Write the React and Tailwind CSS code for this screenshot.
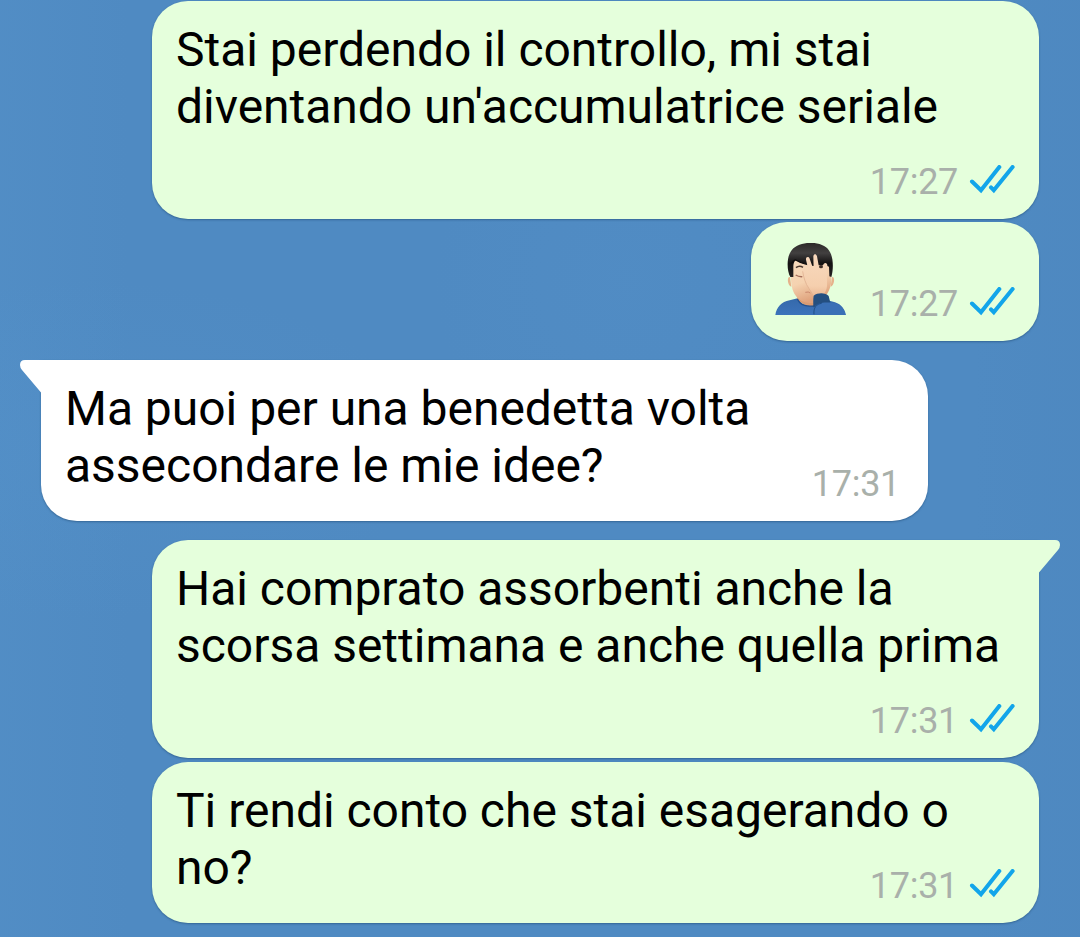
import React from 'react';
import clsx from 'clsx';

const messages = [
  {
    id: 1,
    lines: ['Stai perdendo il controllo, mi stai', "diventando un'accumulatrice seriale"],
    time: '17:27',
    outgoing: true,
    className: 'mt-px w-[887px] h-[218px]',
  },
  {
    id: 2,
    emoji: true,
    time: '17:27',
    outgoing: true,
    className: 'mt-[3px] w-[288px] h-[119px]',
  },
  {
    id: 3,
    lines: ['Ma puoi per una benedetta volta', 'assecondare le mie idee?'],
    time: '17:31',
    tail: true,
    inlineTime: true,
    className: 'mt-[19px] w-[887px] h-[161px]',
  },
  {
    id: 4,
    lines: ['Hai comprato assorbenti anche la', 'scorsa settimana e anche quella prima'],
    time: '17:31',
    outgoing: true,
    tail: true,
    className: 'mt-[19px] w-[887px] h-[218px]',
  },
  {
    id: 5,
    lines: ['Ti rendi conto che stai esagerando o', 'no?'],
    time: '17:31',
    outgoing: true,
    inlineTime: true,
    className: 'mt-1 w-[887px] h-[161px]',
  },
];

const ReadTicks = () => (
  <svg width="46" height="30" viewBox="0 0 46 30" fill="none" stroke="#12a5ea" strokeWidth="4" strokeLinecap="round">
    <path d="M3 16.500 12 25.300 30.300 2" />
    <path d="M22 22.400 24.800 25.300 43.600 2" />
  </svg>
);

const FacepalmEmoji = () => (
  <svg width="71" height="72" viewBox="30 24 213 216" aria-label="Facepalm">
    <defs>
      <linearGradient id="skin" x1="0" y1="0" x2="0.3" y2="1">
        <stop offset="0" stopColor="#f9dcc0" />
        <stop offset="0.6" stopColor="#f5d2b0" />
        <stop offset="1" stopColor="#dfa27c" />
      </linearGradient>
      <linearGradient id="hand" x1="0" y1="0" x2="0" y2="1">
        <stop offset="0" stopColor="#f8d9bd" />
        <stop offset="0.65" stopColor="#f5cfae" />
        <stop offset="1" stopColor="#e3a984" />
      </linearGradient>
      <linearGradient id="hair" x1="0" y1="0" x2="0" y2="1">
        <stop offset="0" stopColor="#2c2928" />
        <stop offset="0.3" stopColor="#424040" />
        <stop offset="0.6" stopColor="#141212" />
        <stop offset="1" stopColor="#252122" />
      </linearGradient>
      <linearGradient id="shirt" x1="0" y1="0" x2="0" y2="1">
        <stop offset="0" stopColor="#3468a9" />
        <stop offset="1" stopColor="#3c73bb" />
      </linearGradient>
    </defs>
    <path d="M31 240c4-24 18-39 43-44l24-6c12 20 30 27 52 21l4-24 56 15c20 7 29 20 33 38z" fill="url(#shirt)" />
    <path d="M97 176h60v34q-36 12-60-18z" fill="#d89b73" />
    <path d="M97 192c8 17 26 25 54 20" fill="none" stroke="#24508d" strokeWidth="4" />
    <path d="M75 126c-10-2-8 25 4 29M201 126c10-2 8 25-4 29" fill="#e6b28b" />
    <path d="M77 81c17-24 106-26 122 1v53c-1 39-28 69-63 69-33 0-57-25-58-69z" fill="url(#skin)" />
    <path d="M76 126c-11-19-11-58 1-76 20-35 102-37 119 3 10 20 9 54 3 73l-6-2-1-29c-9-4-22-4-33-4-29-1-51-4-67-16-5 5-7 12-7 21v30z" fill="url(#hair)" />
    <path d="M80 85q8-11 12-10 30 18 67 16" fill="none" stroke="#0f0d0e" strokeWidth="4" />
    <path d="M93 98q10-8 21-1" fill="none" stroke="#49372e" strokeWidth="5" />
    <path d="M92 120q9 6 20 5" fill="none" stroke="#a36c59" strokeWidth="4" />
    <path d="M148 201c-1-18-11-29-18-42-10-17-15-35-17-50-2-8 6-10 10-3l12 20-12-52c-1-8 7-11 11-3l12 34-1-41c1-8 9-8 11 0l8 43 12-20c5-7 12-2 11 6-3 27 0 44-1 60-1 19-16 26-16 51z" fill="url(#hand)" />
    <path d="M113 109c3 20 9 37 18 50 7 12 15 22 17 34" fill="none" stroke="#dba989" strokeWidth="2" />
    <ellipse cx="168" cy="95" rx="6" ry="5" fill="#3e2d27" />
    <path d="M121 172q10-3 15 2" fill="none" stroke="#c9876c" strokeWidth="3" />
    <path d="M145 217c0-14-1-24 1-35 13-10 36-9 45 1l6 24z" fill="#244f80" />
    <path d="M145 240c-2-16 2-28 16-34 13-5 42-5 57 2 15 8 21 19 23 32z" fill="#3a70b6" />
    <path d="M147 238c-2-20 7-31 23-33" fill="none" stroke="#1f4e87" strokeWidth="3" />
  </svg>
);

// little corner that sticks out of the first bubble in a group
const Tail = ({ outgoing }) => (
  <svg
    width="24"
    height="33"
    viewBox="0 0 24 33"
    className={clsx(
      'absolute top-0',
      outgoing ? '-right-[21px] text-[#e5ffdc]' : '-left-[21px] -scale-x-100 text-white'
    )}
  >
    <path d="M0 0H19Q24 0 24 5Q24 7.500 22 10L3 32.500V33H0Z" fill="currentColor" />
  </svg>
);

const MessageBubble = ({ message }) => {
  const { lines, emoji, time, outgoing, tail, inlineTime, className } = message;

  return (
    <div
      className={clsx(
        'relative flex shrink-0 flex-col rounded-[36px] pb-[19px] pl-6 shadow-[0_1px_2px_rgba(25,65,105,0.5)]',
        emoji ? 'pt-[21px]' : 'pt-5',
        outgoing ? 'mr-[41px] self-end bg-[#e5ffdc] pr-6' : 'ml-[41px] self-start bg-white pr-7',
        tail && (outgoing ? 'rounded-tr-none' : 'rounded-tl-none'),
        className
      )}
    >
      {tail && <Tail outgoing={outgoing} />}
      {lines && (
        <div className="text-[48px] leading-[57px] tracking-[-0.02px] whitespace-nowrap text-black">
          {lines.map((line) => (
            <p key={line}>{line}</p>
          ))}
        </div>
      )}
      <div
        className={clsx(
          'flex',
          emoji ? 'items-end justify-between' : 'justify-end',
          inlineTime && '-mt-7',
          !emoji && !inlineTime && 'mt-auto'
        )}
      >
        {emoji && <FacepalmEmoji />}
        <div className={clsx('flex items-center', emoji && '-mb-[7px]')}>
          <span className="text-[36px] leading-9 tracking-[-0.3px] text-[#a9b0aa]">{time}</span>
          {outgoing && (
            <span className="-mt-1 ml-[11px]">
              <ReadTicks />
            </span>
          )}
        </div>
      </div>
    </div>
  );
};

export default function App() {
  return (
    <main className="flex h-[937px] w-[1080px] flex-col overflow-hidden bg-[#4f8ac2] bg-[linear-gradient(90deg,rgba(92,155,210,0.18),transparent_12%,transparent_90%,rgba(70,125,180,0.12)),radial-gradient(ellipse_at_8%_48%,rgba(90,155,212,0.15),transparent_25%),radial-gradient(ellipse_at_58%_30%,rgba(90,150,206,0.15),transparent_22%)] font-['Roboto',sans-serif]">
      {messages.map((message) => (
        <MessageBubble key={message.id} message={message} />
      ))}
    </main>
  );
}
